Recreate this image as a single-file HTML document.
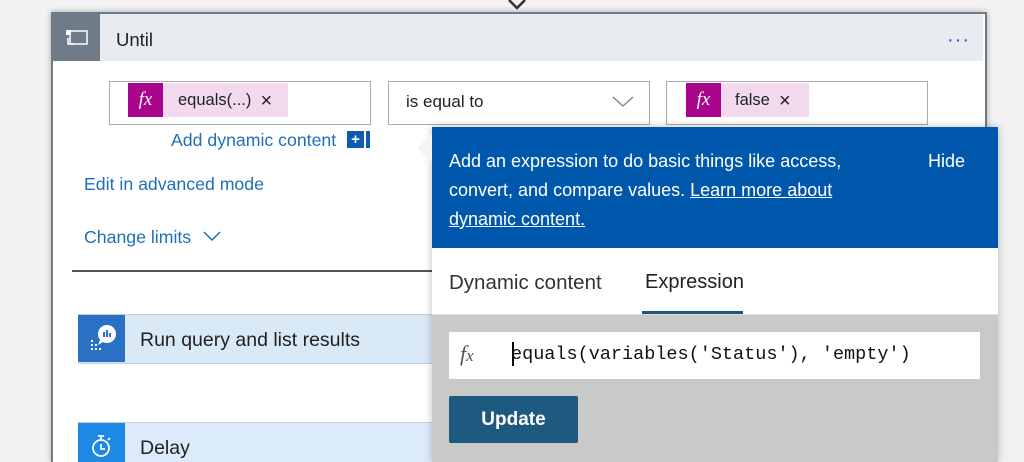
<!DOCTYPE html>
<html style="overflow:hidden"><head><style>
html,body{margin:0;width:1024px;height:462px;overflow:hidden}
body{background:#f2f2f2;font-family:"Segoe UI","Liberation Sans",sans-serif;position:relative}
.a{position:absolute}
.t{font-size:19.5px;color:#222}
.link{color:#1f6fb8;font-size:17.7px}
.chip{position:absolute;top:83px;height:34px;background:#f2d9ee}
.fx{position:absolute;left:0;top:0;width:35px;height:34px;background:#a8058c;color:#fff;font-family:"Liberation Serif",serif;font-style:italic;font-size:19px;text-align:center;line-height:33px}
.x{font-size:20px;vertical-align:-2px}
</style></head><body>
<svg class="a" style="left:506px;top:0" width="22" height="12"><path d="M3 0 L11 8 L19 0" stroke="#333" stroke-width="2.5" fill="none"/></svg>
<div class="a" style="left:51px;top:12px;width:932px;height:448px;border:2px solid #6f7b86;border-bottom:none;background:#fff;box-shadow:0 0 6px rgba(0,0,0,.3)"></div>
<div class="a" style="left:53px;top:14px;width:930px;height:47px;background:#e8ebef"></div>
<div class="a" style="left:53px;top:14px;width:47px;height:47px;background:#6f7b86"></div>
<svg class="a" style="left:64px;top:28px" width="26" height="20"><rect x="6" y="3" width="17" height="13" fill="none" stroke="#fff" stroke-width="1.5"/><rect x="2" y="2" width="5" height="5" fill="#fff"/><path d="M4 10 v6 h6" stroke="#fff" stroke-width="1.5" fill="none"/></svg>
<div class="a" style="left:116px;top:29px;font-size:18.5px;color:#222">Until</div>
<div class="a" style="left:947px;top:29px;color:#1f5fb0;font-size:20px;letter-spacing:1px">···</div>

<div class="a" style="left:109px;top:81px;width:260px;height:42px;border:1px solid #aaa"></div>
<div class="chip" style="left:128px;width:160px"><div class="fx">fx</div><span class="a" style="left:50px;top:7px;font-size:16.5px;color:#222">equals(...) &nbsp;<span class="x">×</span></span></div>
<div class="a link" style="left:171px;top:130px">Add dynamic content</div>
<div class="a" style="left:347px;top:131px;width:17px;height:17px;background:#0f5bb0;color:#fff;font-size:15px;font-weight:bold;text-align:center;line-height:17px">+</div>
<div class="a" style="left:366px;top:131px;width:4px;height:17px;background:#0f5bb0"></div>

<div class="a" style="left:388px;top:81px;width:260px;height:42px;border:1px solid #aaa;background:#fff"></div>
<div class="a" style="left:406px;top:92px;font-size:17px;color:#222">is equal to</div>
<svg class="a" style="left:612px;top:96px" width="22" height="12"><path d="M1 1 L11 10 L21 1" stroke="#888" stroke-width="1.5" fill="none"/></svg>

<div class="a" style="left:666px;top:81px;width:260px;height:42px;border:1px solid #aaa;background:#fff"></div>
<div class="chip" style="left:686px;width:123px"><div class="fx">fx</div><span class="a" style="left:49px;top:7px;font-size:16.5px;color:#222">false &nbsp;<span class="x">×</span></span></div>

<div class="a link" style="left:84px;top:174px">Edit in advanced mode</div>
<div class="a link" style="left:84px;top:227px">Change limits</div>
<svg class="a" style="left:203px;top:231px" width="18" height="11"><path d="M1 1 L9 9 L17 1" stroke="#1f6fb8" stroke-width="1.5" fill="none"/></svg>
<div class="a" style="left:72px;top:270px;width:360px;height:2px;background:#555"></div>

<div class="a" style="left:78px;top:314px;width:354px;height:48px;background:#dae9f6;border-top:1px solid #c8ced4;border-bottom:1px solid #c8ced4"></div>
<div class="a" style="left:78px;top:315px;width:47px;height:47px;background:#2a70c4"></div>
<svg class="a" style="left:86px;top:322px" width="34" height="34"><circle cx="21" cy="12" r="9" fill="#fff"/><path d="M14 18 L12 23 L17 20Z" fill="#fff"/><rect x="17" y="10" width="2" height="5" fill="#2a70c4"/><rect x="20" y="8" width="2" height="7" fill="#2a70c4"/><rect x="23" y="11" width="2" height="4" fill="#2a70c4"/><g fill="#fff"><rect x="5" y="18" width="2" height="2"/><rect x="5" y="22" width="2" height="2"/><rect x="5" y="26" width="2" height="2"/><rect x="9" y="26" width="2" height="2"/><rect x="13" y="26" width="2" height="2"/><rect x="9" y="22" width="2" height="2"/></g></svg>
<div class="a t" style="left:140px;top:329px">Run query and list results</div>

<div class="a" style="left:78px;top:422px;width:354px;height:40px;background:#dcebfb;border-top:1px solid #c8ced4"></div>
<div class="a" style="left:78px;top:423px;width:47px;height:39px;background:#1e88e5"></div>
<svg class="a" style="left:88px;top:432px" width="26" height="28"><circle cx="13" cy="16" r="8" stroke="#fff" stroke-width="1.8" fill="none"/><path d="M10 4h6M13 4v4M13 12v5h4M20 8l2-2" stroke="#fff" stroke-width="1.8" fill="none"/></svg>
<div class="a t" style="left:140px;top:437px">Delay</div>

<div class="a" style="left:432px;top:127px;width:566px;height:335px;background:#fff;box-shadow:0 0 8px rgba(0,0,0,.25)"></div>
<svg class="a" style="left:411px;top:133px" width="22" height="30"><path d="M22 0 L6 15 L22 30Z" fill="#f4f4f4"/></svg>
<div class="a" style="left:432px;top:127px;width:566px;height:121px;background:#0058ad"></div>
<div class="a" style="left:449px;top:147px;width:425px;color:#fff;font-size:18px;line-height:29px">Add an expression to do basic things like access, convert, and compare values. <u>Learn more about dynamic content.</u></div>
<div class="a" style="left:928px;top:147px;color:#fff;font-size:18px;line-height:29px">Hide</div>
<div class="a" style="left:449px;top:271px;font-size:20.5px;color:#333">Dynamic content</div>
<div class="a" style="left:645px;top:271px;font-size:20px;color:#222">Expression</div>
<div class="a" style="left:642px;top:311px;width:101px;height:3px;background:#1e5a80"></div>
<div class="a" style="left:432px;top:314px;width:566px;height:148px;background:#c8cac8;border-top:1px solid #ddd"></div>
<div class="a" style="left:449px;top:332px;width:531px;height:47px;background:#fff"></div>
<div class="a" style="left:460px;top:341px;font-family:'Liberation Serif',serif;font-style:italic;font-size:22px;color:#555">f<span style="font-size:17px">x</span></div>
<div class="a" style="left:512px;top:342px;width:2px;height:24px;background:#000"></div>
<div class="a" style="left:511px;top:344px;font-family:'Liberation Mono',monospace;font-size:18.5px;color:#111">equals(variables('Status'), 'empty')</div>
<div class="a" style="left:449px;top:396px;width:129px;height:47px;background:#1e5a80;border-radius:2px;color:#fff;font-size:19px;font-weight:bold;text-align:center;line-height:47px">Update</div>
</body></html>
